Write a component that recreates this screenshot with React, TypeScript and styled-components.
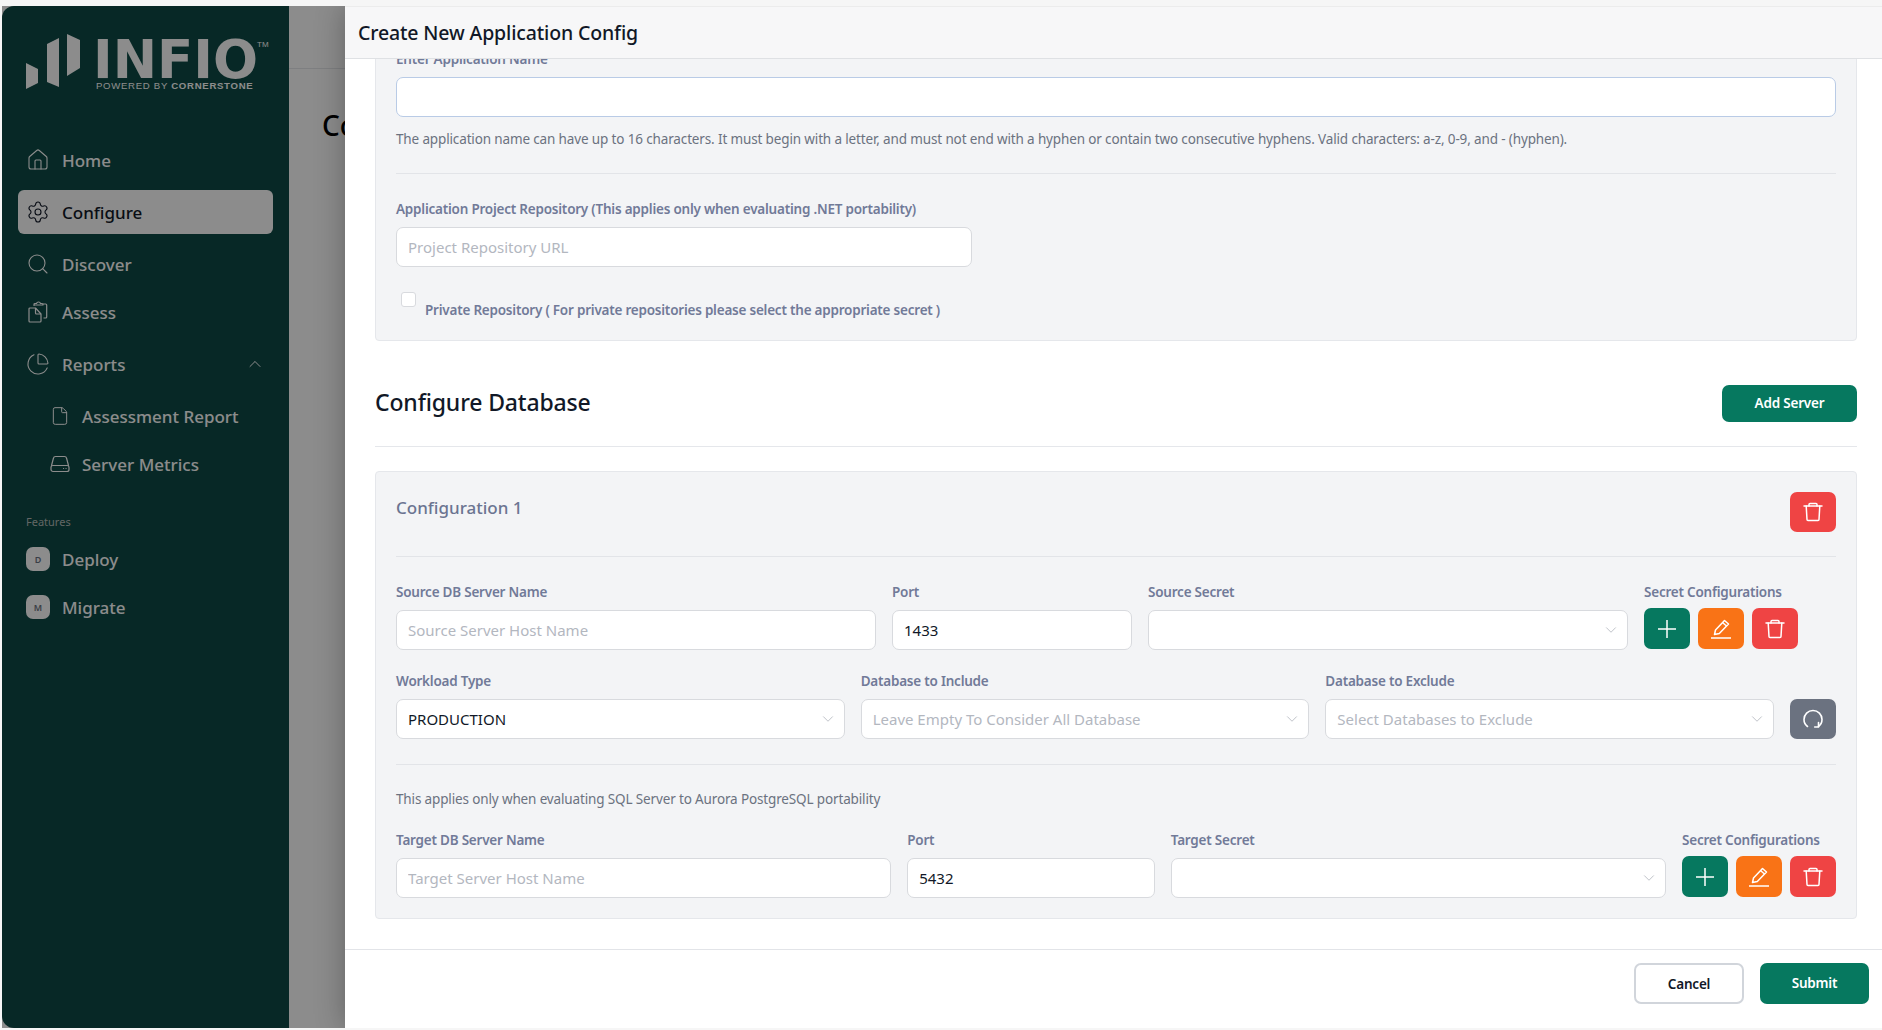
import React from 'react'
import styled, { createGlobalStyle } from 'styled-components'
import { House, Settings, Search, ChartPie, ChevronUp, ChevronDown, File } from 'lucide-react'

const GlobalStyle = createGlobalStyle`
  html, body {
    margin: 0;
    height: 100%;
    overflow: hidden;
    background: #f6f6f6;
    font-family: "Noto Sans", "Liberation Sans", sans-serif;
  }
  * { box-sizing: border-box; }
`

const Shell = styled.div`
  position: relative;
  display: flex;
  margin: 6px 0 0 2px;
  height: 1022px;
  overflow: hidden;
  background: #fff;
`

const Sidebar = styled.aside`
  flex: 0 0 287px;
  background: #0d4a45;
  border-radius: 12px 0 0 12px;
  padding: 28px 16px 0 16px;
`

const LogoRow = styled.div`
  display: flex;
  align-items: flex-start;
  gap: 13px;
  height: 104px;
  padding-left: 8px;
`

const LogoWords = styled.div`
  position: relative;
  width: 170px;
`

const LogoName = styled.div`
  margin-top: 5px;
  font-family: "DejaVu Sans", sans-serif;
  font-weight: 700;
  font-size: 53px;
  line-height: 41px;
  color: #fff;
`

const LogoTm = styled.span`
  position: absolute;
  left: 164px;
  top: 6px;
  font-family: "Liberation Sans", sans-serif;
  font-size: 8px;
  color: #fff;
`

const LogoSub = styled.div`
  font-family: "Liberation Sans", sans-serif;
  font-size: 9.6px;
  letter-spacing: 0.7px;
  margin-left: 3px;
  white-space: nowrap;
  color: #fff;

  b { font-weight: 700; }
`

const NavItem = styled.div<{ $active?: boolean; $sub?: boolean; $top?: number }>`
  display: flex;
  align-items: center;
  height: 44px;
  margin-top: ${p => p.$top ?? 0}px;
  padding-left: ${p => (p.$sub ? 32 : 8)}px;
  padding-right: 8px;
  gap: 12px;
  border-radius: 6px;
  background: ${p => (p.$active ? '#fff' : 'transparent')};
  color: ${p => (p.$active ? '#111827' : '#fff')};
  font-size: 17px;
  font-weight: 500;

  svg { flex: none; }
`

const NavLabel = styled.span`
  flex: 1;
`

const FeaturesTitle = styled.div`
  margin-top: 28px;
  padding-left: 8px;
  font-size: 11px;
  line-height: 16px;
  color: #b4bbb8;
`

const Badge = styled.span`
  display: flex;
  align-items: center;
  justify-content: center;
  width: 24px;
  height: 24px;
  border-radius: 7px;
  background: #fff;
  color: #6b7280;
  font-size: 9px;
  font-weight: 600;
`

const Main = styled.main`
  flex: 1;
`

const MainTop = styled.div`
  height: 63px;
  border-bottom: 1px solid #e5e7eb;
  background: #fff;
`

const MainTitle = styled.h1`
  margin: 37px 0 0 33px;
  font-size: 28px;
  line-height: 38px;
  font-weight: 500;
  color: #000;
  white-space: nowrap;
`

const Overlay = styled.div`
  position: absolute;
  inset: 0;
  background: rgba(0, 0, 0, 0.45);
`

const Drawer = styled.section`
  position: absolute;
  top: 0;
  right: 0;
  bottom: 0;
  width: 1537px;
  display: flex;
  flex-direction: column;
  background: #fff;
  box-shadow: 0 0 28px rgba(0, 0, 0, 0.3);
`

const DrawerHeader = styled.header`
  flex: 0 0 53px;
  display: flex;
  align-items: center;
  padding: 0 13px;
  background: #f7f7f8;
  border-top: 1px solid #ececec;
  border-bottom: 1px solid #dfe1e4;
  font-size: 19.5px;
  font-weight: 500;
  letter-spacing: -0.14px;
  color: #111827;
`

const DrawerBody = styled.div`
  flex: 1;
  min-height: 0;
  overflow: hidden;
  padding: 0 25px 0 30px;
`

const Panel = styled.div`
  background: #f3f4f6;
  border: 1px solid #e5e7eb;
  border-radius: 4px;
  padding: 0 20px;
`

const TopPanel = styled(Panel)`
  margin-top: -20px;
  padding-top: 10px;
  padding-bottom: 21px;
`

const Label = styled.label`
  display: block;
  margin-bottom: 9px;
  font-size: 13.5px;
  line-height: 18px;
  font-weight: 600;
  letter-spacing: -0.22px;
  color: #717a98;
  white-space: nowrap;
`

const Field = styled.input<{ $focus?: boolean; $width?: number }>`
  display: block;
  width: ${p => (p.$width ? `${p.$width}px` : '100%')};
  height: 40px;
  padding: 0 11px;
  background: #fff;
  border: 1px solid ${p => (p.$focus ? '#b9cbe6' : '#d8dade')};
  border-radius: 7px;
  outline: none;
  font: inherit;
  font-size: 15px;
  color: #111827;

  &::placeholder { color: #b3b7bf; opacity: 1; }
`

const Select = styled.div<{ $empty?: boolean }>`
  display: flex;
  align-items: center;
  justify-content: space-between;
  height: 40px;
  padding: 0 7px 0 11px;
  background: #fff;
  border: 1px solid #d8dade;
  border-radius: 7px;
  font-size: 15px;
  color: ${p => (p.$empty ? '#b3b7bf' : '#111827')};

  svg { color: #a9adb5; flex: none; }
`

const Help = styled.p`
  margin: 12px 0 0;
  font-size: 13.5px;
  line-height: 20px;
  letter-spacing: -0.14px;
  color: #6b7280;
  white-space: nowrap;
`

const Rule = styled.hr<{ $top: number; $bottom: number }>`
  margin: ${p => p.$top}px 0 ${p => p.$bottom}px;
  border: 0;
  border-top: 1px solid #e2e4e8;
`

const CheckRow = styled.div`
  display: flex;
  margin-top: 25px;
  padding-left: 5px;
  gap: 9px;
`

const CheckBox = styled.span`
  flex: none;
  width: 15px;
  height: 15px;
  background: #fff;
  border: 1px solid #d8dade;
  border-radius: 3px;
`

const CheckLabel = styled(Label)`
  margin: 9px 0 0;
`

const SectionHead = styled.div`
  display: flex;
  align-items: center;
  justify-content: space-between;
  margin-top: 44px;
  padding-bottom: 24px;
  border-bottom: 1px solid #e5e7eb;
`

const SectionTitle = styled.h2`
  margin: -1px 0 1px;
  font-size: 23px;
  line-height: 37px;
  font-weight: 500;
  letter-spacing: -0.15px;
  color: #111827;
`

const PrimaryButton = styled.button`
  height: 37px;
  width: 135px;
  padding: 0 0 1px;
  border: 0;
  border-radius: 7px;
  background: #06785f;
  color: #fff;
  font: inherit;
  font-size: 13.5px;
  font-weight: 600;
  letter-spacing: -0.2px;
`

const ConfigCard = styled(Panel)`
  margin-top: 24px;
  padding-top: 20px;
  padding-bottom: 20px;
`

const ConfigHead = styled.div`
  display: flex;
  align-items: flex-start;
  justify-content: space-between;
`

const ConfigTitle = styled.h3`
  margin: 4px 0 0;
  font-size: 17px;
  line-height: 24px;
  font-weight: 500;
  color: #6b7491;
`

const Row = styled.div<{ $cols: string; $top?: number }>`
  display: grid;
  grid-template-columns: ${p => p.$cols};
  column-gap: 16px;
  margin-top: ${p => p.$top ?? 0}px;
`

const IconButton = styled.button<{ $tone: string; $h?: number }>`
  display: flex;
  align-items: center;
  justify-content: center;
  width: 46px;
  height: ${p => p.$h ?? 41}px;
  padding: 0;
  border: 0;
  border-radius: 7px;
  background: ${p => p.$tone};
  color: #fff;
`

const ButtonGroup = styled.div`
  display: flex;
  gap: 8px;
  margin-top: -2px;
`

const ReloadCell = styled.div`
  align-self: end;
`

const Note = styled.p`
  margin: 0 0 22px;
  font-size: 13.5px;
  line-height: 20px;
  letter-spacing: -0.14px;
  color: #6b7280;
`

const DrawerFooter = styled.footer`
  flex: 0 0 79px;
  display: flex;
  justify-content: flex-end;
  gap: 16px;
  padding: 13px 13px 0 0;
  background: #fff;
  border-top: 1px solid #e2e4e8;
`

const CancelButton = styled.button`
  width: 110px;
  height: 41px;
  background: #fff;
  border: 2px solid #d1d5db;
  border-radius: 7px;
  color: #111827;
  font: inherit;
  font-size: 13.5px;
  font-weight: 600;
  letter-spacing: -0.2px;
`

const SubmitButton = styled(PrimaryButton)`
  width: 109px;
  height: 41px;
`

const LogoMark = () => (
  <svg width="54" height="56" viewBox="0 0 54 56" fill="#fff">
    <polygon points="0,29 12,35 12,49 0,55" />
    <polygon points="21,10 33,4 33,53 21,48" />
    <polygon points="41,0 54,6 54,34 41,42" />
  </svg>
)

const AssessIcon = () => (
  <svg width="24" height="22" viewBox="-2 0 24 22" fill="none" stroke="currentColor" strokeWidth="1.2" strokeLinejoin="round">
    <path d="M6 4.500V3.400c0-.5.4-.9.9-.9h1.600C8.800 1.500 9.600 1 10.500 1s1.700.5 2 1.500h1.600c.5 0 .9.4.9.9v.6H6z" />
    <path d="M15 3h2.700c.6 0 1 .4 1 1v12c0 .6-.4 1-1 1h-2.200" />
    <path d="M2 7h5.500l5.500 6v7c0 .6-.4 1-1 1H2c-.6 0-1-.4-1-1V8c0-.6.4-1 1-1z" />
    <path d="M7.500 7v5c0 .6.4 1 1 1H13" />
  </svg>
)

const DriveIcon = () => (
  <svg width="20" height="18" viewBox="0 0 20 18" fill="none" stroke="currentColor" strokeWidth="1.2" strokeLinecap="round" strokeLinejoin="round">
    <path d="M1.500 10.500 3.500 3c.2-.9 1-1.500 2-1.500h9c1 0 1.800.6 2 1.500l2 7.500" />
    <rect x="1" y="10.500" width="18" height="6" rx="2" />
    <path d="M13.500 13.500h.1M16 13.500h.1" />
  </svg>
)

const TrashIcon = () => (
  <svg width="20" height="20" viewBox="0 0 20 20" fill="none" stroke="currentColor" strokeWidth="1.5" strokeLinejoin="round" strokeLinecap="round">
    <path d="M1 4h18" />
    <path d="M6 4V2.400c0-.6.4-1 1-1h6c.6 0 1 .4 1 1V4" />
    <path d="M3.200 4l.8 13.500c0 .6.500 1 1 1h10c.500 0 1-.4 1-1L16.800 4" />
  </svg>
)

const PenIcon = () => (
  <svg width="20" height="20" viewBox="0 0 20 20" fill="none" stroke="currentColor" strokeWidth="1.5" strokeLinejoin="round">
    <path d="M0 19h20" strokeLinecap="round" />
    <path d="M3.500 15.500 4.500 11 13.500 1.500 17.500 5 8.300 14.500z" />
    <path d="M11.500 3.500 15.500 7" />
  </svg>
)

const PlusIcon = () => (
  <svg width="18" height="18" viewBox="0 0 18 18" fill="none" stroke="currentColor" strokeWidth="1.5" strokeLinecap="round">
    <path d="M9 0v18M0 9h18" />
  </svg>
)

const ReloadIcon = () => (
  <svg width="20" height="20" viewBox="0 0 20 20" fill="none" stroke="currentColor" strokeWidth="1.6" strokeLinecap="round" strokeLinejoin="round">
    <path d="M4.500 17.500C2.300 15.900 1 13.400 1 10.500 1 5.500 5 1.500 10 1.500s9 4 9 9c0 2.900-1.300 5.400-3.500 7" />
    <path d="M15.500 13.500v4.500h-3.800" />
  </svg>
)

const Chevron = () => <ChevronDown size={18} strokeWidth={1} />

const SecretButtons = () => (
  <ButtonGroup>
    <IconButton $tone="#06785f"><PlusIcon /></IconButton>
    <IconButton $tone="#f97316"><PenIcon /></IconButton>
    <IconButton $tone="#ef4444"><TrashIcon /></IconButton>
  </ButtonGroup>
)

const App = () => {
  return (
    <>
      <GlobalStyle />
      <Shell>
        <Sidebar>
          <LogoRow>
            <LogoMark />
            <LogoWords>
              <LogoName>INFIO</LogoName>
              <LogoTm>TM</LogoTm>
              <LogoSub>POWERED BY <b>CORNERSTONE</b></LogoSub>
            </LogoWords>
          </LogoRow>

          <NavItem><House size={24} strokeWidth={1.1} /><NavLabel>Home</NavLabel></NavItem>
          <NavItem $active $top={8}><Settings size={24} strokeWidth={1.1} /><NavLabel>Configure</NavLabel></NavItem>
          <NavItem $top={8}><Search size={24} strokeWidth={1.1} /><NavLabel>Discover</NavLabel></NavItem>
          <NavItem $top={4}><AssessIcon /><NavLabel>Assess</NavLabel></NavItem>
          <NavItem $top={8}><ChartPie size={24} strokeWidth={1.1} /><NavLabel>Reports</NavLabel><ChevronUp size={20} strokeWidth={1.2} /></NavItem>
          <NavItem $sub $top={8}><File size={20} strokeWidth={1.2} /><NavLabel>Assessment Report</NavLabel></NavItem>
          <NavItem $sub $top={4}><DriveIcon /><NavLabel>Server Metrics</NavLabel></NavItem>

          <FeaturesTitle>Features</FeaturesTitle>
          <NavItem $top={7}><Badge>D</Badge><NavLabel>Deploy</NavLabel></NavItem>
          <NavItem $top={4}><Badge>M</Badge><NavLabel>Migrate</NavLabel></NavItem>
        </Sidebar>

        <Main>
          <MainTop />
          <MainTitle>Configurations</MainTitle>
        </Main>

        <Overlay />

        <Drawer>
          <DrawerHeader>Create New Application Config</DrawerHeader>

          <DrawerBody>
            <TopPanel>
              <Label>Enter Application Name</Label>
              <Field $focus />
              <Help>The application name can have up to 16 characters. It must begin with a letter, and must not end with a hyphen or contain two consecutive hyphens. Valid characters: a-z, 0-9, and - (hyphen).</Help>
              <Rule $top={24} $bottom={26} />
              <Label>Application Project Repository (This applies only when evaluating .NET portability)</Label>
              <Field $width={576} placeholder="Project Repository URL" />
              <CheckRow>
                <CheckBox />
                <CheckLabel>Private Repository ( For private repositories please select the appropriate secret )</CheckLabel>
              </CheckRow>
            </TopPanel>

            <SectionHead>
              <SectionTitle>Configure Database</SectionTitle>
              <PrimaryButton>Add Server</PrimaryButton>
            </SectionHead>

            <ConfigCard>
              <ConfigHead>
                <ConfigTitle>Configuration 1</ConfigTitle>
                <IconButton $tone="#ef4444" $h={40}><TrashIcon /></IconButton>
              </ConfigHead>
              <Rule $top={24} $bottom={26} />

              <Row $cols="2fr 1fr 2fr 192px">
                <div><Label>Source DB Server Name</Label><Field placeholder="Source Server Host Name" /></div>
                <div><Label>Port</Label><Field defaultValue="1433" /></div>
                <div><Label>Source Secret</Label><Select><span /><Chevron /></Select></div>
                <div><Label>Secret Configurations</Label><SecretButtons /></div>
              </Row>

              <Row $cols="1fr 1fr 1fr 46px" $top={22}>
                <div><Label>Workload Type</Label><Select>PRODUCTION<Chevron /></Select></div>
                <div><Label>Database to Include</Label><Select $empty>Leave Empty To Consider All Database<Chevron /></Select></div>
                <div><Label>Database to Exclude</Label><Select $empty>Select Databases to Exclude<Chevron /></Select></div>
                <ReloadCell><IconButton $tone="#6b7280" $h={40}><ReloadIcon /></IconButton></ReloadCell>
              </Row>

              <Rule $top={25} $bottom={24} />
              <Note>This applies only when evaluating SQL Server to Aurora PostgreSQL portability</Note>

              <Row $cols="2fr 1fr 2fr 154px">
                <div><Label>Target DB Server Name</Label><Field placeholder="Target Server Host Name" /></div>
                <div><Label>Port</Label><Field defaultValue="5432" /></div>
                <div><Label>Target Secret</Label><Select><span /><Chevron /></Select></div>
                <div><Label>Secret Configurations</Label><SecretButtons /></div>
              </Row>
            </ConfigCard>
          </DrawerBody>

          <DrawerFooter>
            <CancelButton>Cancel</CancelButton>
            <SubmitButton>Submit</SubmitButton>
          </DrawerFooter>
        </Drawer>
      </Shell>
    </>
  )
}

export default App
